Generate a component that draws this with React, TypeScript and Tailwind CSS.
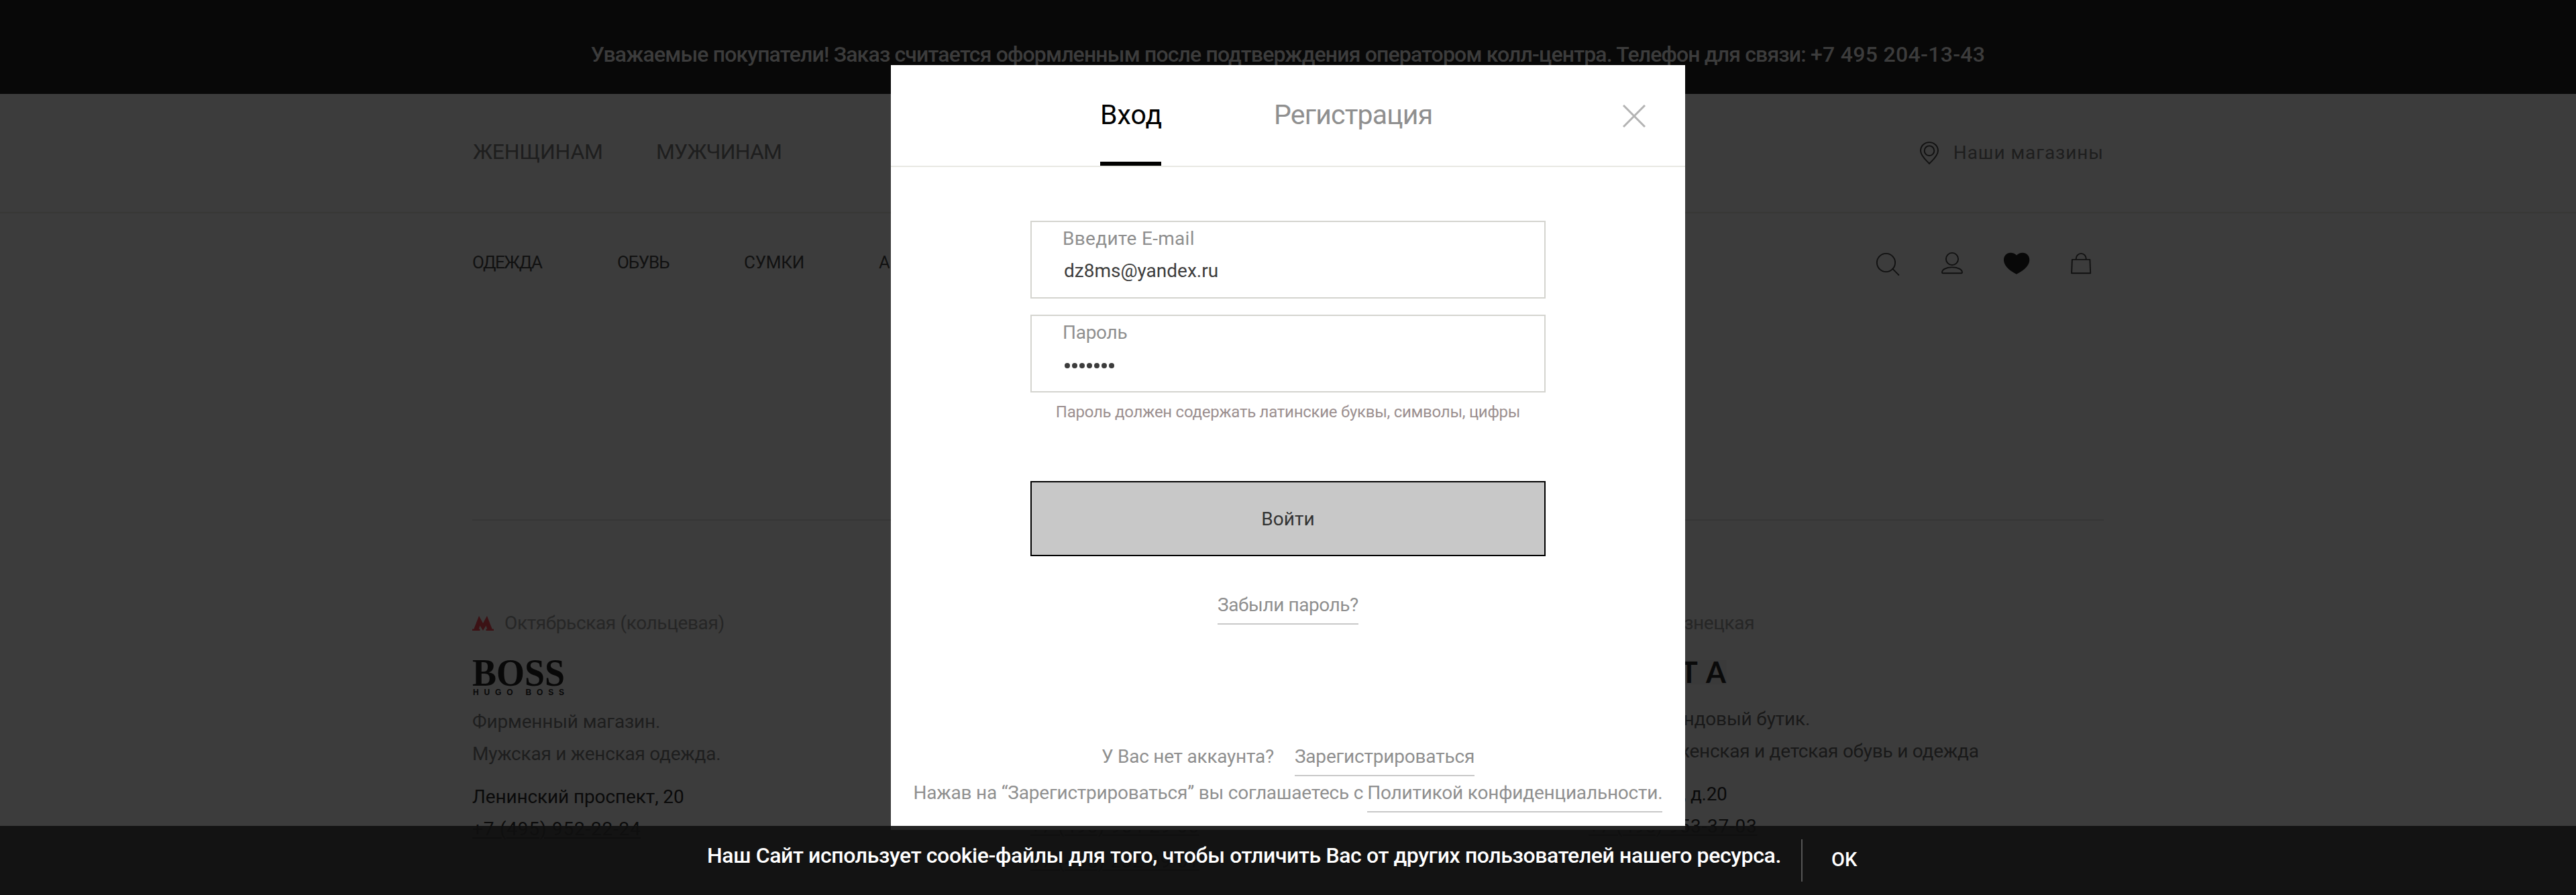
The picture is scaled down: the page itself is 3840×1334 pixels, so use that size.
import type { ReactNode } from "react";

function SearchIcon() {
  return (
    <svg className="size-12" viewBox="0 0 48 48" fill="none" stroke="#111" strokeWidth="1.9" strokeLinecap="round">
      <circle cx="21.5" cy="22.5" r="13.6" />
      <path d="M31.5 31.8 40.4 40.8" />
    </svg>
  );
}

function UserIcon() {
  return (
    <svg className="size-12" viewBox="0 0 48 48" fill="none" stroke="#111" strokeWidth="1.9">
      <circle cx="24" cy="17" r="9.1" />
      <path d="M9 37c0-4.2 6-7.6 15-7.6S39 32.8 39 37c0 .8-.6 1.3-1.5 1.3h-27C9.6 38.3 9 37.8 9 37z" />
    </svg>
  );
}

function HeartIcon() {
  return (
    <svg className="size-12" viewBox="0 0 48 48" fill="#080808">
      <path d="M24 39.8C18 36.5 5 29.5 5 18.3 5 12 9.4 7.7 15 7.7c3.9 0 7 1.4 9.1 3.7 2.1-2.3 5.2-3.7 9.1-3.7 5.7 0 10.1 4.3 10.1 10.6C43.3 29.5 30 36.5 24 39.8z" />
    </svg>
  );
}

function BagIcon() {
  return (
    <svg className="size-12" viewBox="0 0 48 48" fill="none" stroke="#111" strokeWidth="1.9" strokeLinejoin="round">
      <path d="M10.9 17.9h26.5l.8 20.3H10.1z" />
      <path d="M16.8 17.9V16.5a7.4 7.6 0 0 1 14.9 0v1.4" />
    </svg>
  );
}

function PinIcon() {
  return (
    <svg className="h-[34px] w-7" viewBox="0 0 28 34" fill="none" stroke="#111" strokeWidth="1.9" strokeLinejoin="round">
      <path d="M14 33C10 28.5 1 21.5 1 13.8 1 6.6 6.7 1.1 14 1.1s13 5.5 13 12.7C27 21.5 18 28.5 14 33z" />
      <circle cx="14" cy="13.7" r="7.3" />
    </svg>
  );
}

function MetroIcon() {
  return (
    <svg className="h-[22px] w-8" viewBox="0 0 32 22" fill="#3c1215">
      <path d="M10 0 16 11 22 0 29.6 19.5H32V22H20.5V19.5H22.2L20.5 14.5 16 22 11.5 14.5 9.8 19.5H11.5V22H0V19.5H2.4z" />
    </svg>
  );
}

function Header() {
  return (
    <header>
      <div className="h-[140px] bg-[#080808] pt-[57px] text-center text-[32px] leading-[48px] font-medium tracking-[-0.84px] whitespace-nowrap text-[#3c3c3c]">
        Уважаемые покупатели! Заказ считается оформленным после подтверждения оператором колл-центра. Телефон для связи:{" "}
        <span className="tracking-[0.3px]">+7 495 204-13-43</span>
      </div>
      <div className="h-[178px] border-b-2 border-[#373735] px-[704px]">
        <div className="flex h-full items-center justify-between">
          <nav className="grid grid-cols-[274px_auto] pb-1 text-[32px] leading-[48px] text-[#1e1e1e]">
            <a className="pl-px tracking-[-0.27px]">ЖЕНЩИНАМ</a>
            <a className="tracking-[-0.83px]">МУЖЧИНАМ</a>
          </nav>
          <a className="flex items-center gap-[22px] text-[28px] leading-[48px] tracking-[0.92px] text-[#1e1e1e]">
            <PinIcon />
            Наши магазины
          </a>
        </div>
      </div>
      <div className="flex h-[150px] items-center justify-between pr-[714px] pl-[704px]">
        <nav className="grid grid-cols-[216px_189px_201px_auto] pb-1 text-[26px] leading-[48px] text-[#111]">
          <a className="tracking-[-1.5px]">ОДЕЖДА</a>
          <a className="tracking-[-1.1px]">ОБУВЬ</a>
          <a className="tracking-[-0.25px]">СУМКИ</a>
          <a className="w-4 overflow-hidden">А</a>
        </nav>
        <div className="flex gap-12">
          <SearchIcon />
          <UserIcon />
          <HeartIcon />
          <BagIcon />
        </div>
      </div>
    </header>
  );
}

function Station({ children }: { children: ReactNode }) {
  return (
    <div className="flex items-center gap-4 leading-[48px] tracking-[-0.36px] text-[#262626]">
      <MetroIcon />
      {children}
    </div>
  );
}

function Phone({ children }: { children: ReactNode }) {
  return (
    <a className="w-[252px] leading-[48px] tracking-[0.77px] text-[#0b0b0b] underline decoration-2 underline-offset-[3px]">
      {children}
    </a>
  );
}

function Stores() {
  return (
    <section className="mx-[704px] mt-[306px] grid grid-cols-[832px_832px_768px] border-t-2 border-[#363636] pt-[129px] text-[28px] whitespace-nowrap">
      <div className="flex flex-col">
        <Station>Октябрьская (кольцевая)</Station>
        <div className="mt-[31px] h-[68px] text-[#080808]">
          <svg className="h-[54px] w-[138px] overflow-visible" viewBox="0 0 138 54" fill="currentColor">
            <text x="0" y="37.5" textLength="138" lengthAdjust="spacingAndGlyphs" className="font-['Liberation_Serif'] text-[57px] font-bold">
              BOSS
            </text>
            <text x="1" y="51.5" textLength="136" className="font-['Liberation_Sans'] text-[12px] font-bold">
              HUGO BOSS
            </text>
          </svg>
        </div>
        <p className="leading-[48px] tracking-[-0.16px] text-[#1e1e1e]">Фирменный магазин.</p>
        <p className="leading-[48px] tracking-[-0.25px] text-[#1e1e1e]">Мужская и женская одежда.</p>
        <p className="mt-4 leading-[48px] tracking-[-0.12px] text-[#0a0a0a]">Ленинский проспект, 20</p>
        <Phone>+7 (495) 952-22-24</Phone>
      </div>
      <div className="flex flex-col gap-1 pt-[303px]">
        <Phone>+7 (495) 954-29-05</Phone>
        <Phone>+7 (495) 232-09-01</Phone>
      </div>
      <div className="flex flex-col">
        <Station>Новокузнецкая</Station>
        <div className="mt-[31px] h-16 text-[#0a0a0a]">
          <svg className="h-9 w-[206px] overflow-visible" viewBox="0 0 206 36" fill="currentColor">
            <rect width="206" height="36" fill="#3a3a3a" />
            <text x="137 175" y="33.5" className="font-['Lato'] text-[43px] font-bold">
              TA
            </text>
          </svg>
        </div>
        <p className="leading-[48px] tracking-[-0.16px] text-[#191919]">Мультибрендовый бутик.</p>
        <p className="leading-[48px] tracking-[-0.25px] text-[#191919]">Мужская, женская и детская обувь и одежда</p>
        <p className="mt-4 leading-[48px] tracking-[-0.35px] text-[#0a0a0a]">Пятницкая, д.20</p>
        <Phone>+7 (495) 953-37-03</Phone>
      </div>
    </section>
  );
}

function Field({ label, labelClass, children }: { label: string; labelClass: string; children: ReactNode }) {
  return (
    <label className="block h-[116px] border-2 border-[#d4d4cf] pt-[9px] pl-[46px] leading-8">
      <span className={`block text-[#8f8f8f] ${labelClass}`}>{label}</span>
      {children}
    </label>
  );
}

function LoginDialog() {
  return (
    <div className="absolute inset-0 flex items-start justify-center pt-[97px]">
      <div role="dialog" className="h-[1140px] w-[1184px] bg-white text-[28px] whitespace-nowrap text-[#8f8f8f]">
        <div className="flex h-[152px] border-b-2 border-[#e8e8e3] pl-[312px] text-[41px] leading-[60px]">
          <button className="flex w-[91px] flex-col border-b-[6px] border-black pt-11 text-black">Вход</button>
          <button className="ml-[168px] flex flex-col pt-11 tracking-[-0.8px]">Регистрация</button>
          <button className="mt-[59px] mr-[59px] ml-auto size-[34px]">
            <svg className="size-[34px]" viewBox="0 0 34 34" stroke="#b3b3b3" strokeWidth="3">
              <path d="M1 1 33 33M33 1 1 33" />
            </svg>
          </button>
        </div>
        <form className="mx-auto flex w-[768px] flex-col pt-20">
          <Field label="Введите E-mail" labelClass="tracking-[0.3px]">
            <span className="mt-4 block pl-0.5 text-[#3c3c3c]">dz8ms@yandex.ru</span>
          </Field>
          <div className="h-6" />
          <Field label="Пароль" labelClass="tracking-[-0.27px]">
            <span className="mt-[29px] flex gap-[3px] pl-[3px]">
              {Array.from({ length: 7 }, (_, i) => (
                <i key={i} className="size-2 rounded-full bg-[#3c3c3c]" />
              ))}
            </span>
          </Field>
          <p className="mt-[13px] text-center text-[24px] leading-8 tracking-[-0.27px] text-[#9b8f8f]">
            Пароль должен содержать латинские буквы, символы, цифры
          </p>
          <button className="mt-[87px] h-28 border-2 border-black bg-[#c8c8c8] pt-0.5 tracking-[0.1px] text-[#333]">Войти</button>
          <a className="mt-12 h-[54px] self-center border-b-2 border-[#c8c8c8] leading-[50px] tracking-[-0.43px]">Забыли пароль?</a>
        </form>
        <div className="mt-[172px] flex justify-center gap-[31px] leading-[50px]">
          <span className="tracking-[-0.25px]">У Вас нет аккаунта?</span>
          <a className="h-[54px] border-b-2 border-[#c8c8c8] tracking-[-0.2px]">Зарегистрироваться</a>
        </div>
        <div className="flex justify-center gap-1.5 leading-[50px]">
          <span className="tracking-[-0.22px]">Нажав на “Зарегистрироваться” вы соглашаетесь с</span>
          <a className="h-[54px] border-b-2 border-[#c8c8c8] tracking-[-0.2px]">Политикой конфиденциальности.</a>
        </div>
      </div>
    </div>
  );
}

function CookieBar() {
  return (
    <div className="absolute inset-x-0 bottom-0 flex h-[103px] items-start bg-[#0f0f0f]/91 pt-5 pl-[1054px] font-medium whitespace-nowrap text-white">
      <p className="w-[1631px] text-[32px] leading-[48px] tracking-[-0.37px]">
        Наш Сайт использует cookie-файлы для того, чтобы отличить Вас от других пользователей нашего ресурса.
      </p>
      <span className="h-[63px] w-0.5 bg-[#555]" />
      <button className="mt-1.5 ml-[43px] text-[29px] leading-[48px]">OK</button>
    </div>
  );
}

export default function App() {
  return (
    <div className="relative h-[1334px] w-[3840px] overflow-hidden bg-[#3c3c3c] font-['Roboto',sans-serif]">
      <Header />
      <Stores />
      <LoginDialog />
      <CookieBar />
    </div>
  );
}
